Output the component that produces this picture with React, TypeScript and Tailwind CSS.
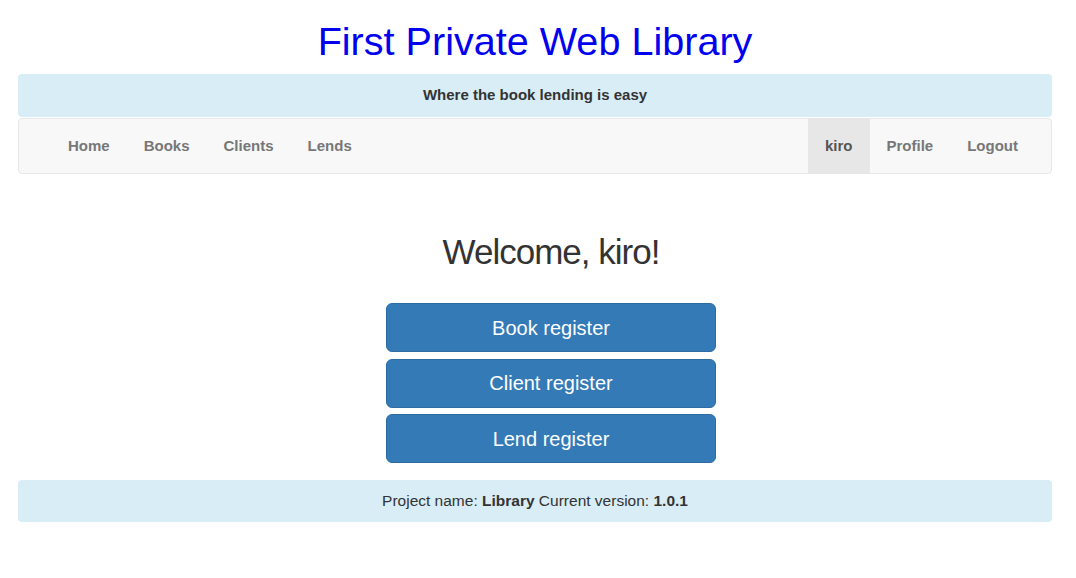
const leftLinks = ["Home", "Books", "Clients", "Lends"];
const actions = ["Book register", "Client register", "Lend register"];

export default function App() {
  return (
    <div className="min-h-screen bg-white pl-[18px] pr-[24px] text-[15px] text-[#333] [font-family:'Liberation_Sans',Arial,sans-serif]">
      <h1 className="pt-[19px] text-center text-[39.6px] leading-[44px] text-[#0000ee]">
        First Private Web Library
      </h1>

      <div className="mt-[11px] flex h-[43px] items-center justify-center rounded-[4px] bg-[#d9edf7] font-bold">
        Where the book lending is easy
      </div>

      <nav className="mt-px flex h-[56px] items-stretch justify-between rounded-[4px] border border-[#e7e7e7] bg-[#f8f8f8] pl-[32px] pr-[16px] font-bold text-[#777]">
        <ul className="flex">
          {leftLinks.map((l) => (
            <li key={l} className="flex items-center px-[17px]">
              {l}
            </li>
          ))}
        </ul>
        <ul className="flex">
          <li className="flex items-center bg-[#e7e7e7] px-[17px] text-[#555]">kiro</li>
          <li className="flex items-center px-[17px]">Profile</li>
          <li className="flex items-center px-[17px]">Logout</li>
        </ul>
      </nav>

      <main className="flex flex-col items-center pl-[32px] pt-[58px]">
        <h2 className="text-[35px] leading-[40px] tracking-[-1px] text-[#333]">Welcome, kiro!</h2>
        <div className="mt-[31px] flex w-[330px] flex-col gap-[6.5px]">
          {actions.map((a) => (
            <button
              key={a}
              className="flex h-[49px] items-center justify-center rounded-[6px] border border-[#2e6da4] bg-[#337ab7] text-[20px] text-white"
            >
              {a}
            </button>
          ))}
        </div>
      </main>

      <footer className="mt-[17px] flex h-[42px] items-center justify-center rounded-[4px] bg-[#d9edf7] text-[15.5px]">
        <span>
          Project name: <b>Library</b> Current version: <b>1.0.1</b>
        </span>
      </footer>
    </div>
  );
}
